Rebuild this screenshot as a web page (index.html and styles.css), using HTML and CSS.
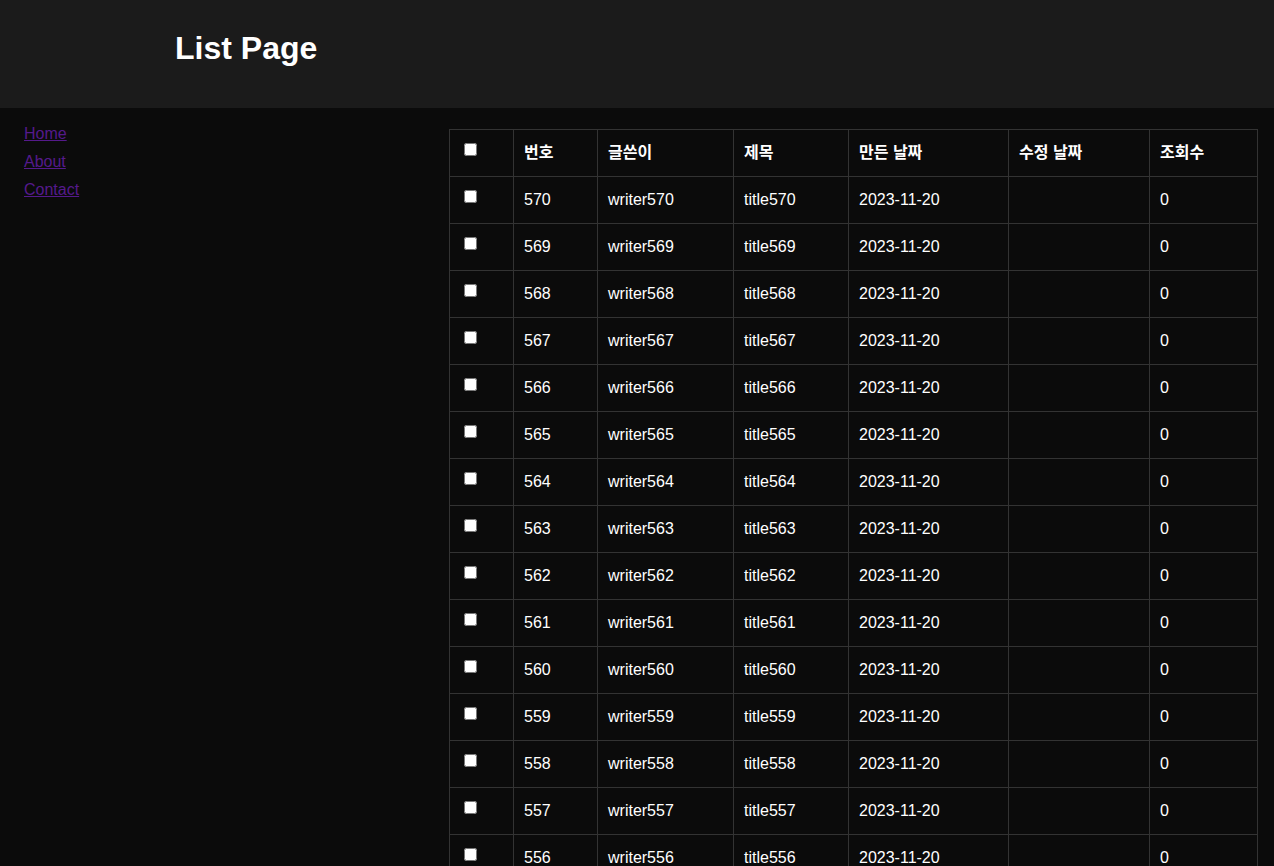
FILE: index.html
```html
<!DOCTYPE html>
<html lang="ko">
<head>
<meta charset="utf-8">
<title>List Page</title>
<link rel="stylesheet" href="styles.css">
</head>
<body>
<header class="site-header">
  <h1 class="site-title">List Page</h1>
</header>
<div class="layout">
  <nav class="side-nav">
    <a class="nav-link" href="#home">Home</a>
    <a class="nav-link" href="#about">About</a>
    <a class="nav-link" href="#contact">Contact</a>
  </nav>
  <main class="content">
    <table class="board">
      <colgroup>
        <col class="c-check"><col class="c-no"><col class="c-writer"><col class="c-title"><col class="c-created"><col class="c-updated"><col class="c-views">
      </colgroup>
      <thead>
        <tr><th><input type="checkbox"></th><th>번호</th><th>글쓴이</th><th>제목</th><th>만든 날짜</th><th>수정 날짜</th><th>조회수</th></tr>
      </thead>
      <tbody>
        <tr><td><input type="checkbox"></td><td>570</td><td>writer570</td><td>title570</td><td>2023-11-20</td><td></td><td>0</td></tr>
        <tr><td><input type="checkbox"></td><td>569</td><td>writer569</td><td>title569</td><td>2023-11-20</td><td></td><td>0</td></tr>
        <tr><td><input type="checkbox"></td><td>568</td><td>writer568</td><td>title568</td><td>2023-11-20</td><td></td><td>0</td></tr>
        <tr><td><input type="checkbox"></td><td>567</td><td>writer567</td><td>title567</td><td>2023-11-20</td><td></td><td>0</td></tr>
        <tr><td><input type="checkbox"></td><td>566</td><td>writer566</td><td>title566</td><td>2023-11-20</td><td></td><td>0</td></tr>
        <tr><td><input type="checkbox"></td><td>565</td><td>writer565</td><td>title565</td><td>2023-11-20</td><td></td><td>0</td></tr>
        <tr><td><input type="checkbox"></td><td>564</td><td>writer564</td><td>title564</td><td>2023-11-20</td><td></td><td>0</td></tr>
        <tr><td><input type="checkbox"></td><td>563</td><td>writer563</td><td>title563</td><td>2023-11-20</td><td></td><td>0</td></tr>
        <tr><td><input type="checkbox"></td><td>562</td><td>writer562</td><td>title562</td><td>2023-11-20</td><td></td><td>0</td></tr>
        <tr><td><input type="checkbox"></td><td>561</td><td>writer561</td><td>title561</td><td>2023-11-20</td><td></td><td>0</td></tr>
        <tr><td><input type="checkbox"></td><td>560</td><td>writer560</td><td>title560</td><td>2023-11-20</td><td></td><td>0</td></tr>
        <tr><td><input type="checkbox"></td><td>559</td><td>writer559</td><td>title559</td><td>2023-11-20</td><td></td><td>0</td></tr>
        <tr><td><input type="checkbox"></td><td>558</td><td>writer558</td><td>title558</td><td>2023-11-20</td><td></td><td>0</td></tr>
        <tr><td><input type="checkbox"></td><td>557</td><td>writer557</td><td>title557</td><td>2023-11-20</td><td></td><td>0</td></tr>
        <tr><td><input type="checkbox"></td><td>556</td><td>writer556</td><td>title556</td><td>2023-11-20</td><td></td><td>0</td></tr>
        <tr><td><input type="checkbox"></td><td>555</td><td>writer555</td><td>title555</td><td>2023-11-20</td><td></td><td>0</td></tr>
        <tr><td><input type="checkbox"></td><td>554</td><td>writer554</td><td>title554</td><td>2023-11-20</td><td></td><td>0</td></tr>
        <tr><td><input type="checkbox"></td><td>553</td><td>writer553</td><td>title553</td><td>2023-11-20</td><td></td><td>0</td></tr>
      </tbody>
    </table>
  </main>
</div>
</body>
</html>
```
FILE: styles.css
```css
html, body {
  margin: 0;
  padding: 0;
  background: #0b0b0b;
  color: #ffffff;
  font-family: "Liberation Sans", Arial, "Noto Sans CJK KR", sans-serif;
  font-size: 16px;
}

.site-header {
  box-sizing: border-box;
  height: 108px;
  background: #1b1b1b;
  padding: 30px 0 0 175px;
}

.site-title {
  margin: 0;
  font-size: 32px;
  line-height: 37px;
  font-weight: bold;
  color: #ffffff;
}

.layout {
  display: flex;
  align-items: flex-start;
}

.side-nav {
  box-sizing: border-box;
  width: 449px;
  flex: none;
  padding: 12px 0 0 24px;
  display: flex;
  flex-direction: column;
  align-items: flex-start;
}

.nav-link {
  color: #551a8b;
  line-height: 28px;
  text-decoration: underline;
}

.content {
  flex: 1;
  padding: 21px 16px 0 0;
}

.board {
  border-collapse: collapse;
  table-layout: fixed;
  width: 808px;
}

.board th,
.board td {
  border: 1px solid #333333;
  padding: 12px 10px;
  height: 22px;
  line-height: 22px;
  text-align: left;
  vertical-align: top;
  white-space: nowrap;
}

.board th {
  font-weight: bold;
}

.board input[type="checkbox"] {
  vertical-align: top;
  margin: 1px 3px 0 4px;
}

.c-check { width: 64px; }
.c-no { width: 84px; }
.c-writer { width: 136px; }
.c-title { width: 115px; }
.c-created { width: 160px; }
.c-updated { width: 141px; }
.c-views { width: 108px; }
```
